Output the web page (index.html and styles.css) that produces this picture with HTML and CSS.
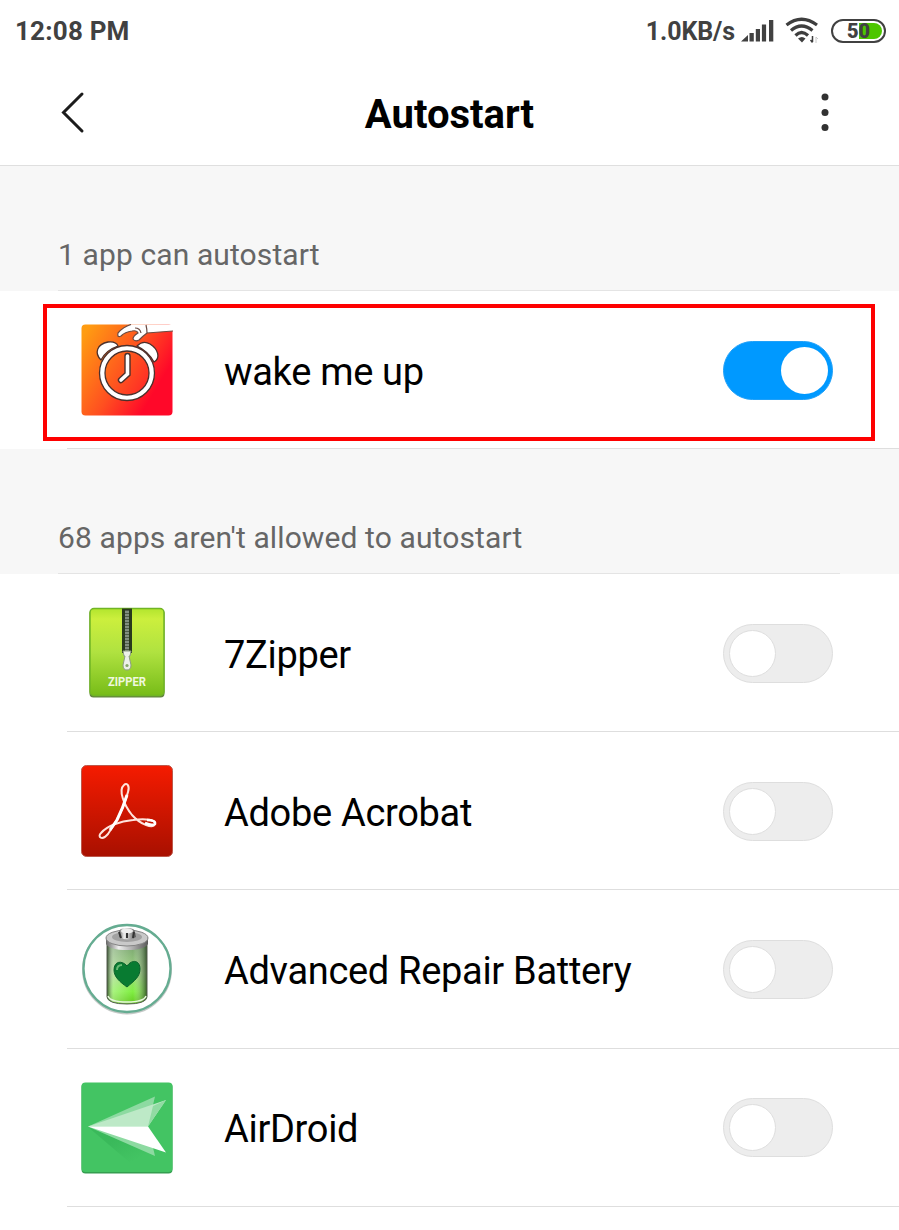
FILE: index.html
```html
<!DOCTYPE html>
<html lang="en">
<head>
<meta charset="utf-8">
<title>Autostart</title>
<link rel="stylesheet" href="styles.css">
</head>
<body>
<div class="statusbar">
  <span class="clock">12:08 PM</span>
  <span class="speed">1.0KB/s</span>
  <svg class="signal" width="34" height="24" viewBox="0 0 34 24"><path d="M0 22.500h7v-6.500zM8.500 14h4.300v8.500h-4.300zM14.800 10h4.200v12.500h-4.200zM20.900 5.500h4.200v17h-4.200zM28 1h4.300v21.500h-4.300z" fill="#414141"/></svg>
  <svg class="wifi" width="34" height="28" viewBox="0 0 34 28"><g fill="none" stroke="#3e3e3e" stroke-width="3.200"><path d="M1.500 8Q16.500-3.500 32 8"/><path d="M6 13.500Q16.500 4.500 27.500 13.500"/><path d="M10.500 18.500Q16.500 12.500 23 18.500"/></g><path d="M13 21.500Q17 18.500 20.500 21.500L17 25.500z" fill="#3e3e3e"/><path d="M27.500 19v6m-2-2l2 2.500" stroke="#3e3e3e" stroke-width="1.500" fill="none"/><path d="M31 26v-6m2 2l-2-2" stroke="#c8c8c8" fill="none"/></svg>
  <span class="battery"><i class="charge"></i><b class="level">50</b></span>
</div>
<header class="header">
  <svg width="30" height="46" viewBox="0 0 30 46"><path d="M23 5L4.500 23.500L23 42" fill="none" stroke="#1c1c1c" stroke-width="3" stroke-linecap="round"/></svg>
  <h1 class="title">Autostart</h1>
  <svg width="10" height="40" viewBox="0 0 10 40"><g fill="#323232"><circle cx="5" cy="5" r="3.500"/><circle cx="5" cy="20.500" r="3.500"/><circle cx="5" cy="35.500" r="3.500"/></g></svg>
</header>
<main>
  <h2 class="section allowed">1 app can autostart</h2>
  <div class="row active">
    <svg class="icon" viewBox="0 0 92 92">
      <defs><linearGradient id="sun" x1="0" y1="0.150" x2="1" y2="0.750"><stop offset="0" stop-color="#ff9c12"/><stop offset=".5" stop-color="#ff4f20"/><stop offset=".85" stop-color="#ff0829"/></linearGradient><linearGradient id="dial" x1="0" y1="0.150" x2="1" y2="0.750"><stop stop-color="#ff7419"/><stop offset="1" stop-color="#ff2b26"/></linearGradient></defs>
      <rect x=".5" y=".5" width="91" height="91" rx="4" fill="url(#sun)"/>
      <g fill="#fff" stroke="#4b302c" stroke-width="1.300" stroke-linejoin="round">
        <path d="M20 36C13 29 16 20 27 18Q35 17 37 22Q25 26 20 36z"/><path d="M56 22Q62 16 69 20C77 25 80 34 73 38Q67 27 56 22z"/>
        <circle cx="46" cy="49" r="27.500"/>
        <path stroke="none" d="M50 .5H92V7L66 9Q62 12 58 16Q54 18 52 15Q52 12 57 9Q56 6 51 7Q44 8 40 12Q36 14 37 9Q42 3 50 .5z"/>
      </g>
      <path d="M50 .5Q42 3 37 9Q36 14 40 12Q44 8 51 7Q56 6 57 9Q52 12 52 15Q54 18 58 16Q62 12 66 9L92 7M54 4q5 0 6 5M65 1q1 4 1 8" stroke="#6b4b43" stroke-width="1.200" fill="none"/>
      <circle cx="46" cy="49" r="22" fill="url(#dial)" stroke="#4b302c" stroke-width="1.300"/>
      <path d="M46.500 32V50L40 56" fill="none" stroke="#4b302c" stroke-width="6.400" stroke-linecap="round"/><path d="M46.500 32V50L40 56" fill="none" stroke="#fff" stroke-width="3.600" stroke-linecap="round"/>
    </svg>
    <span class="name">wake me up</span><span class="switch on"></span>
  </div>
  <h2 class="section denied">68 apps aren't allowed to autostart</h2>
  <div class="row">
    <svg class="icon" viewBox="0 0 92 92">
      <defs><linearGradient id="lime" x2="0" y2="1"><stop stop-color="#b2e52e"/><stop offset=".12" stop-color="#ccef3d"/><stop offset=".5" stop-color="#b0e240"/><stop offset="1" stop-color="#77bc18"/></linearGradient></defs>
      <rect x="8.500" y="2.500" width="75" height="88" rx="4" fill="#63853e"/><rect x="9" y="1.500" width="74" height="87" rx="4" fill="url(#lime)" stroke="#70b524" stroke-width="1.500"/>
      <path d="M41 1.500H51V46H41z" fill="#29391d"/><path d="M46 3v42" stroke="#829080" stroke-width="4"/><path d="M46 3v42" stroke="#4d5a49" stroke-width="4" stroke-dasharray="1 2"/>
      <path d="M42 44h8l-1 5h-1l2 9q0 5-4 5t-4-5l2-9h-1z" fill="#edf1e9" stroke="#8c9c81"/><circle cx="46" cy="58.500" r="1.600" fill="#87a86a"/>
      <text x="46" y="79" class="ziptext" text-anchor="middle" textLength="38" lengthAdjust="spacingAndGlyphs">ZIPPER</text>
    </svg>
    <span class="name">7Zipper</span><span class="switch"></span>
  </div>
  <div class="row">
    <svg class="icon" viewBox="0 0 92 92">
      <defs><linearGradient id="red" x2="0" y2="1"><stop stop-color="#f51b00"/><stop offset="1" stop-color="#a81000"/></linearGradient></defs>
      <rect x=".5" y=".5" width="91" height="91" rx="5" fill="url(#red)" stroke="#bd584b"/>
      <path d="M43 20C46 17 49 21 47 27C42 46 32 62 27 69C21 76 16 72 20 68C26 61 39 56 52 55C65 53 75 55 74 59C72 64 60 60 51 50C43 40 37 25 43 20z" fill="none" stroke="#ffe3dc" stroke-width="2"/>
      <path d="M46 30Q42 43 36 55L29 65" fill="none" stroke="#fff" stroke-width="3"/><path d="M66 55q9 0 8 4q-3 2-10-1" fill="none" stroke="#fff" stroke-width="2.500"/>
    </svg>
    <span class="name">Adobe Acrobat</span><span class="switch"></span>
  </div>
  <div class="row">
    <svg class="icon" viewBox="0 0 92 92">
      <defs><linearGradient id="cell" x2="0" y2="1"><stop stop-color="#6d9865"/><stop offset=".5" stop-color="#9bd47d"/><stop offset=".8" stop-color="#79ee38"/><stop offset="1" stop-color="#5bc713"/></linearGradient><linearGradient id="shade"><stop stop-color="#263c20" stop-opacity=".85"/><stop offset=".16" stop-color="#fff" stop-opacity=".35"/><stop offset=".65" stop-color="#fff" stop-opacity=".05"/><stop offset="1" stop-color="#203c19" stop-opacity=".8"/></linearGradient><linearGradient id="metal"><stop stop-color="#686868"/><stop offset=".3" stop-color="#eee"/><stop offset=".65" stop-color="#aaa"/><stop offset="1" stop-color="#595959"/></linearGradient></defs>
      <circle cx="46" cy="46.500" r="44" fill="none" stroke="#c5c9c7" stroke-width="2"/><circle cx="46" cy="45.500" r="43.500" fill="#fff" stroke="#65ac91" stroke-width="2.300"/>
      <path d="M26 18V74Q27 81 46 81T66 74V18z" fill="url(#cell)"/><path d="M26 18V74Q27 81 46 81T66 74V18z" fill="url(#shade)" stroke="#565f50"/><path d="M27 73q2 6 19 6t19-6" fill="none" stroke="#e7f7dc" stroke-width="1.500"/>
      <path d="M25 14v7q4 6 21 6t21-6v-7z" fill="url(#metal)"/><ellipse cx="46" cy="15" rx="21" ry="8" fill="#c9c9c9" stroke="#858585"/><ellipse cx="46" cy="14" rx="15" ry="5" fill="#a2a2a2"/><path d="M38 9q0-4 8-4t8 4l1 5q-8 5-17 0z" fill="url(#metal)"/><ellipse cx="46" cy="8" rx="6" ry="2.500" fill="#eee"/><path d="M38 9l2 6m13-6l-1 6M46 10v5" stroke="#333" stroke-width="2"/>
      <path d="M46 64C39 59 33 54 33 47C33 38 41 37 46 43C51 36 59 37 59 46C59 54 53 58 46 64z" fill="#087b31" stroke="#0a612b"/><path d="M36 47q0-5 5-5" stroke="#67bb75" stroke-width="2" fill="none"/>
    </svg>
    <span class="name">Advanced Repair Battery</span><span class="switch"></span>
  </div>
  <div class="row">
    <svg class="icon" viewBox="0 0 92 92">
      <defs><linearGradient id="fade" x2="1" y2="1"><stop offset=".3" stop-color="#259f47" stop-opacity=".3"/><stop offset=".65" stop-color="#259f47" stop-opacity="0"/></linearGradient></defs>
      <rect x=".5" y="1" width="91" height="90.500" rx="4" fill="#359e50"/><rect x=".5" y=".5" width="91" height="89.500" rx="4" fill="#43c463"/>
      <path d="M7 45L75 73L92 90H60z" fill="url(#fade)"/><path d="M7 44.500L74 14.500L67 44.500L74 74z" fill="#8ddaa1"/><path d="M7 44.500L85 18L67 44.500z" fill="#bde9c7"/><path d="M72 24L85 18L67 44.500z" fill="#91dba3"/><path d="M7 44.500H67L85 70.500z" fill="#fff"/>
    </svg>
    <span class="name">AirDroid</span><span class="switch"></span>
  </div>
</main>
</body>
</html>
```
FILE: styles.css
```css
*, *::before, *::after { box-sizing: border-box; }
body { margin: 0; height: 1230px; overflow: hidden; background: #fff; font-family: Roboto, "Liberation Sans", sans-serif; color: #000; }
.statusbar { height: 62px; display: flex; align-items: center; padding: 0 13px 0 15px; color: #414141; font-size: 26px; font-weight: 700; }
.clock { margin-right: auto; letter-spacing: .2px; }
.speed { margin-right: 6px; font-size: 25px; letter-spacing: -.1px; }
.signal { margin-right: 10px; }
.wifi { margin-right: 12px; }
.battery { position: relative; width: 55px; height: 24px; border: 2px solid #414141; border-radius: 12px; display: flex; justify-content: center; align-items: center; padding: 2px; }
.charge { width: 23px; height: 16px; margin-left: auto; border-radius: 0 8px 8px 0; background: #4dc600; }
.level { position: absolute; left: 14px; top: -3px; font-size: 20px; line-height: 26px; }
.header { height: 104px; border-bottom: 1px solid #dfdfdf; padding: 0 69px 3px 59px; display: flex; align-items: center; justify-content: space-between; }
.title { margin: 0; padding: 6px 10px 0 0; font-size: 40px; line-height: 48px; font-weight: 700; }
.section { margin: 0; height: 125px; background: #f7f7f7; padding: 70px 59px 0 58px; font-size: 30px; line-height: 38px; font-weight: 400; color: #666; letter-spacing: .11px; display: grid; align-content: space-between; }
.section::after { content: ""; height: 1px; background: #e4e4e4; }
.row { height: 158.200px; display: grid; grid-template-columns: 92px 1fr 110px; column-gap: 51.500px; align-items: center; padding: 0 66.500px 0 80.500px; background: linear-gradient(#dedede, #dedede) 67px 100% / 100% 1px no-repeat; }
.active { position: relative; height: 158px; }
.active::before { content: ""; position: absolute; left: 43px; top: 13px; width: 832px; height: 137px; border: 4px solid #fe0000; }
.icon { width: 92px; height: 92px; }
.name { font-size: 38px; line-height: 48px; padding-top: 3px; letter-spacing: -.31px; white-space: nowrap; }
.switch { height: 59px; border: 1px solid #dedede; border-radius: 30px; background: #ededed; padding: 5px; display: flex; align-items: center; }
.switch::before { content: ""; width: 47px; height: 47px; border: 1px solid #dedede; border-radius: 50%; background: #fff; }
.on { background: #0099ff; border-color: #20a0f8; justify-content: flex-end; padding-right: 4px; }
.on::before { border: 0; }
.ziptext { font-family: Roboto, sans-serif; font-size: 12px; font-weight: 700; fill: #eff8df; }
```
